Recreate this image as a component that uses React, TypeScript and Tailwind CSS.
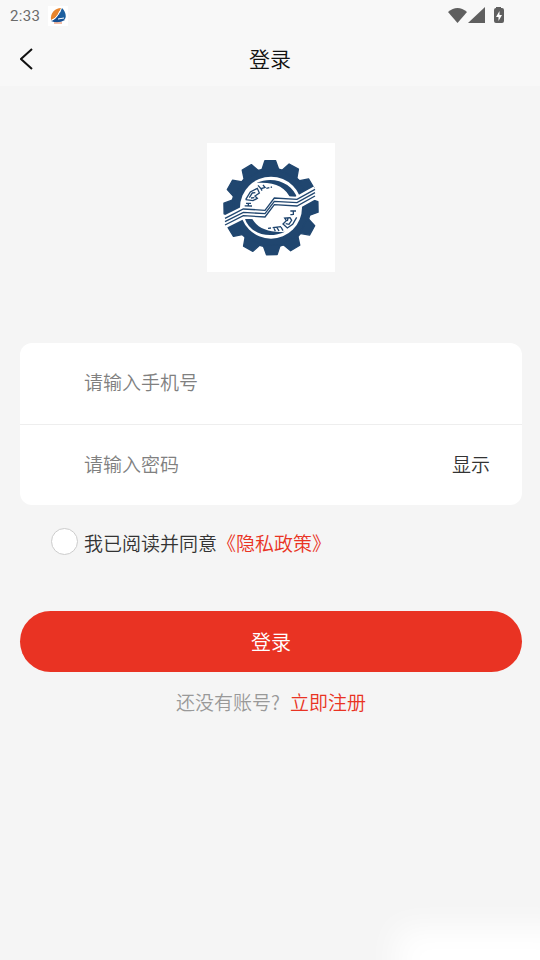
import React, { useState } from 'react';

const teeth = [0, 30, 60, 90, 120, 150, 180, 210, 240, 270, 300, 330];
const bandLines = [-10, 0, 10];

const AppBadge = () => (
  <svg className="h-5 w-5" viewBox="0 0 20 20" aria-hidden="true">
    <rect width="20" height="20" fill="#fff" />
    <path d="M3 14C2 7 7 2 13 2L9 11Z" fill="#e8842c" />
    <path d="M14 2C18 6 19 12 16 14H9Z" fill="#1c5f9f" />
    <path d="M3 15Q8 14 12 6L11 13L17 14Q10 18 3 15Z" fill="#174f91" />
    <path d="M4 14Q8 13 12 5M10 13L16 12" fill="none" stroke="#fff" strokeWidth="1" />
    <path d="M6 17H14" stroke="#e07a50" strokeWidth="1" />
  </svg>
);

const StatusIcons = () => (
  <svg className="h-5 w-15" viewBox="0 0 60 20" fill="#5f5f5f" aria-hidden="true">
    <path d="M0 6Q9.500 -2 19 6L9.500 17Z" />
    <path d="M20 17L37 1V17Z" />
    <path d="M48 1H53V2H54Q56 2 56 4V15Q56 17 54 17H48Q46 17 46 15V4Q46 2 48 2Z" />
    <path d="M51.500 5L48 11H50.500V15L54 9H51.500Z" fill="#fff" />
  </svg>
);

const GearLogo = () => (
  <svg className="h-[129px] w-32 bg-white" viewBox="21 24 384 387" role="img" aria-label="logo">
    <g fill="#20466f" stroke="#20466f" strokeLinejoin="round" strokeWidth="4">
      <circle cx="213" cy="218" r="118" />
      {teeth.map((angle) => (
        <path key={angle} d="M187 106L197 77H229L239 106Z" transform={`rotate(${angle - 1} 213 218)`} />
      ))}
    </g>
    <circle cx="213" cy="218" r="93" fill="#fff" />
    {/* Crescents inside the ring */}
    <g fill="#20466f">
      <path d="M169 144C220 120 279 145 292 190L274 196C258 153 220 140 169 144Z" />
      <path d="M134 248C147 294 204 314 255 290C207 294 167 280 153 243Z" />
    </g>
    {/* Greek key ornaments */}
    <g fill="none" stroke="#20466f" strokeWidth="4">
      <path d="M134 213H156M145 213V204M138 205H153" />
      <path d="M137 194L151 171L172 160L178 174L165 183L172 190L159 197L137 194M148 188L157 174L166 173M153 189L163 188" />
      <path d="M174 151L183 161L195 157L189 150M183 161L186 167M199 160L208 158M212 157L216 156" />
      <path d="M271 228H288M280 228V240M271 239H278" />
      <path d="M290 247L278 268L262 279L249 267L259 257L254 249L270 248L275 256L267 268L257 266M264 249L262 258" />
      <path d="M243 276L249 287M231 278L237 288M222 280L226 289M218 278L243 275M204 280L213 279" />
    </g>
    {/* Ribbon across the gear */}
    <path
      d="M70 263L130 233L196 236L224 200L291 203L350 170"
      fill="none"
      stroke="#fff"
      strokeWidth="36"
    />
    {bandLines.map((dy) => (
      <path
        key={dy}
        d="M75 260L130 232L195 236L223 199L291 203L345 173"
        fill="none"
        stroke="#20466f"
        strokeWidth="4"
        transform={`translate(0 ${dy})`}
      />
    ))}
  </svg>
);

const App = () => {
  const [visible, setVisible] = useState(false);

  return (
    <div className="relative flex min-h-screen flex-col overflow-hidden bg-[#f5f5f5] font-['Noto_Sans_CJK_SC','Noto_Sans',sans-serif] font-[350] text-[#333333]">
      <header className="bg-[#f8f8f8]">
        {/* Status bar */}
        <div className="flex h-8 items-center pr-8 pl-2.5">
          <span className="mr-2 font-[Roboto,sans-serif] text-[15px] font-normal tracking-wide text-[#6b6b6b]">2:33</span>
          <AppBadge />
          <div className="ml-auto">
            <StatusIcons />
          </div>
        </div>
        <div className="grid h-[54px] grid-cols-[1fr_auto_1fr] items-center px-5">
          <button type="button" aria-label="返回" className="w-4">
            <svg className="h-6 w-4" viewBox="0 0 16 24" fill="none" stroke="#111" strokeWidth="2">
              <path d="M12 2L1 12L12 22" />
            </svg>
          </button>
          <h1 className="pb-0.5 text-[21px] leading-8 text-[#111111]">登录</h1>
        </div>
      </header>

      <main className="flex flex-col pt-[57px] pr-[18px] pl-5">
        <div className="flex justify-center">
          <GearLogo />
        </div>

        <form onSubmit={(e) => e.preventDefault()} className="mt-[71px]">
          <div className="overflow-hidden rounded-xl bg-white text-[19px]">
            <div className="flex h-[82px] items-center border-b border-[#eeeeee] pb-0.5 pl-16">
              <input
                type="tel"
                aria-label="手机号"
                placeholder="请输入手机号"
                className="min-w-0 flex-1 bg-transparent outline-none placeholder:text-[#808080]"
              />
            </div>
            <div className="flex h-20 items-center pr-8 pb-0.5 pl-16">
              <input
                type={visible ? 'text' : 'password'}
                aria-label="密码"
                placeholder="请输入密码"
                className="min-w-0 flex-1 bg-transparent outline-none placeholder:text-[#808080]"
              />
              <button type="button" onClick={() => setVisible(!visible)}>
                显示
              </button>
            </div>
          </div>

          <div className="mt-[18px] flex h-9 items-center pl-[31px] text-[19px]">
            <input
              id="agree"
              type="checkbox"
              className="h-[27px] w-[27px] appearance-none rounded-full border border-[#cccccc] bg-white checked:bg-[#e93323]"
            />
            <p className="pt-1 pl-1.5">
              <label htmlFor="agree">我已阅读并同意</label>
              <a href="#privacy" className="text-[#e93323]">
                《隐私政策》
              </a>
            </p>
          </div>

          <button type="submit" className="mt-[52px] h-[61px] w-full rounded-full bg-[#e93323] text-xl text-white">
            登录
          </button>
        </form>

        <p className="mt-4 text-center text-[19px] leading-7 text-[#999999]">
          还没有账号?
          <a href="#register" className="ml-2.5 text-[#e93323]">
            立即注册
          </a>
        </p>
      </main>

      {/* Corner glow */}
      <div className="pointer-events-none absolute -right-8 -bottom-8 h-16 w-44 bg-white blur-lg" />
    </div>
  );
};

export default App;
